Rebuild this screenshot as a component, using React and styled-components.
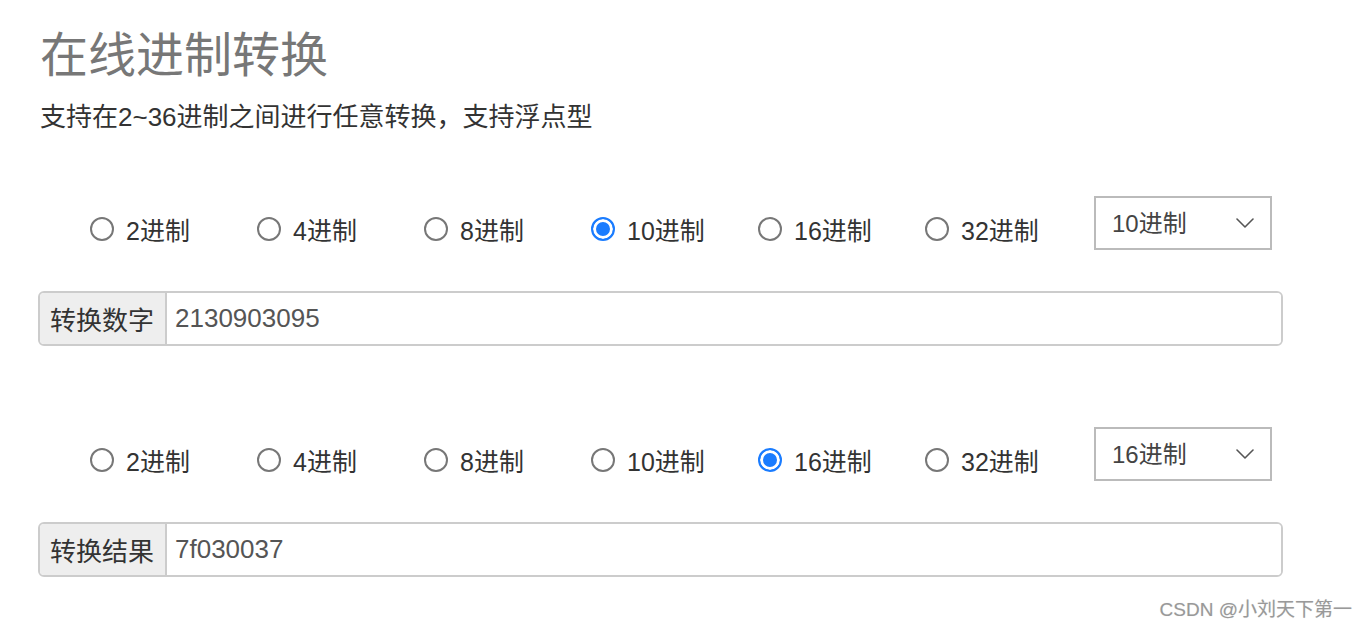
import React, { useState } from "react";
import styled, { createGlobalStyle } from "styled-components";

const GlobalStyle = createGlobalStyle`
  * { box-sizing: border-box; }
  html, body {
    margin: 0;
    padding: 0;
    background: #fff;
    font-family: "Liberation Sans", "Noto Sans CJK SC", sans-serif;
    color: #333;
  }
`;

const BASES = [2, 4, 8, 10, 16, 32];

const convert = (value, from, to) => {
  const n = parseInt(value, from);
  if (Number.isNaN(n)) return "";
  return n.toString(to);
};

const Chevron = () => (
  <svg width="18" height="10" viewBox="0 0 18 10" fill="none">
    <path d="M1 1l8 8 8-8" stroke="#555" strokeWidth="1.6" strokeLinecap="round" strokeLinejoin="round" />
  </svg>
);

const BaseRow = ({ name, base, onChange }) => (
  <ControlRow>
    <RadioGroup>
      {BASES.map((b) => (
        <RadioItem key={b}>
          <Radio
            type="radio"
            name={name}
            checked={base === b}
            onChange={() => onChange(b)}
          />
          {b}进制
        </RadioItem>
      ))}
    </RadioGroup>
    <SelectWrap>
      <Select value={base} onChange={(e) => onChange(Number(e.target.value))}>
        {Array.from({ length: 35 }, (_, i) => i + 2).map((b) => (
          <option key={b} value={b}>
            {b}进制
          </option>
        ))}
      </Select>
      <ChevronBox>
        <Chevron />
      </ChevronBox>
    </SelectWrap>
  </ControlRow>
);

const App = () => {
  const [fromBase, setFromBase] = useState(10);
  const [toBase, setToBase] = useState(16);
  const [value, setValue] = useState("2130903095");

  return (
    <Page>
      <GlobalStyle />
      <Title>在线进制转换</Title>
      <Subtitle>支持在2~36进制之间进行任意转换，支持浮点型</Subtitle>

      <Section>
        <BaseRow name="from" base={fromBase} onChange={setFromBase} />
        <InputGroup>
          <Addon>转换数字</Addon>
          <Field value={value} onChange={(e) => setValue(e.target.value)} />
        </InputGroup>
      </Section>

      <Section second>
        <BaseRow name="to" base={toBase} onChange={setToBase} />
        <InputGroup>
          <Addon>转换结果</Addon>
          <Field readOnly value={convert(value, fromBase, toBase)} />
        </InputGroup>
      </Section>

      <Watermark>CSDN @小刘天下第一</Watermark>
    </Page>
  );
};

const Page = styled.div`
  position: relative;
  width: 1368px;
  height: 630px;
  padding: 26px 0 0 38px;
  overflow: hidden;
`;

const Title = styled.h1`
  margin: 0 0 0 2px;
  font-size: 48px;
  line-height: 60px;
  font-weight: 400;
  color: #777;
`;

const Subtitle = styled.p`
  margin: 16px 0 0 2px;
  font-size: 26px;
  line-height: 30px;
  color: #333;
`;

const Section = styled.div`
  margin-top: ${(p) => (p.second ? "81px" : "64px")};
`;

const ControlRow = styled.div`
  display: flex;
  align-items: flex-start;
  height: 54px;
`;

const RadioGroup = styled.div`
  display: flex;
  margin-left: 52px;
  padding-top: 18px;
`;

const RadioItem = styled.label`
  display: flex;
  align-items: center;
  gap: 12px;
  width: 167px;
  height: 30px;
  font-size: 25px;
  color: #333;
  cursor: pointer;
`;

const Radio = styled.input`
  appearance: none;
  margin: 0;
  width: 24px;
  height: 24px;
  border: 2px solid #777;
  border-radius: 50%;
  background: #fff;
  flex-shrink: 0;
  cursor: pointer;
  &:checked {
    border-color: #1a7cff;
    background: #1a7cff;
    box-shadow: inset 0 0 0 3px #fff;
  }
`;

const SelectWrap = styled.div`
  position: relative;
  margin-left: 2px;
  width: 178px;
  height: 54px;
`;

const Select = styled.select`
  appearance: none;
  width: 100%;
  height: 100%;
  padding: 0 40px 0 16px;
  border: 2px solid #bbb;
  border-radius: 0;
  background: #fff;
  font-family: inherit;
  font-size: 24px;
  color: #444;
  outline: none;
`;

const ChevronBox = styled.span`
  position: absolute;
  right: 18px;
  top: 22px;
  display: flex;
  pointer-events: none;
`;

const InputGroup = styled.div`
  display: flex;
  width: 1245px;
  height: 55px;
  margin-top: 41px;
  border: 2px solid #ccc;
  border-radius: 6px;
  overflow: hidden;
`;

const Addon = styled.span`
  display: flex;
  align-items: center;
  padding: 0 10px;
  width: 127px;
  background: #eee;
  border-right: 2px solid #ccc;
  font-size: 26px;
  color: #333;
  white-space: nowrap;
`;

const Field = styled.input`
  flex: 1;
  border: none;
  padding: 0 8px;
  font-family: inherit;
  font-size: 26px;
  color: #555;
  background: #fff;
  outline: none;
`;

const Watermark = styled.div`
  position: absolute;
  right: 16px;
  bottom: 9px;
  font-size: 19px;
  color: #999;
  text-shadow: 0 0 1px rgba(0, 0, 0, 0.15);
`;

export default App;
